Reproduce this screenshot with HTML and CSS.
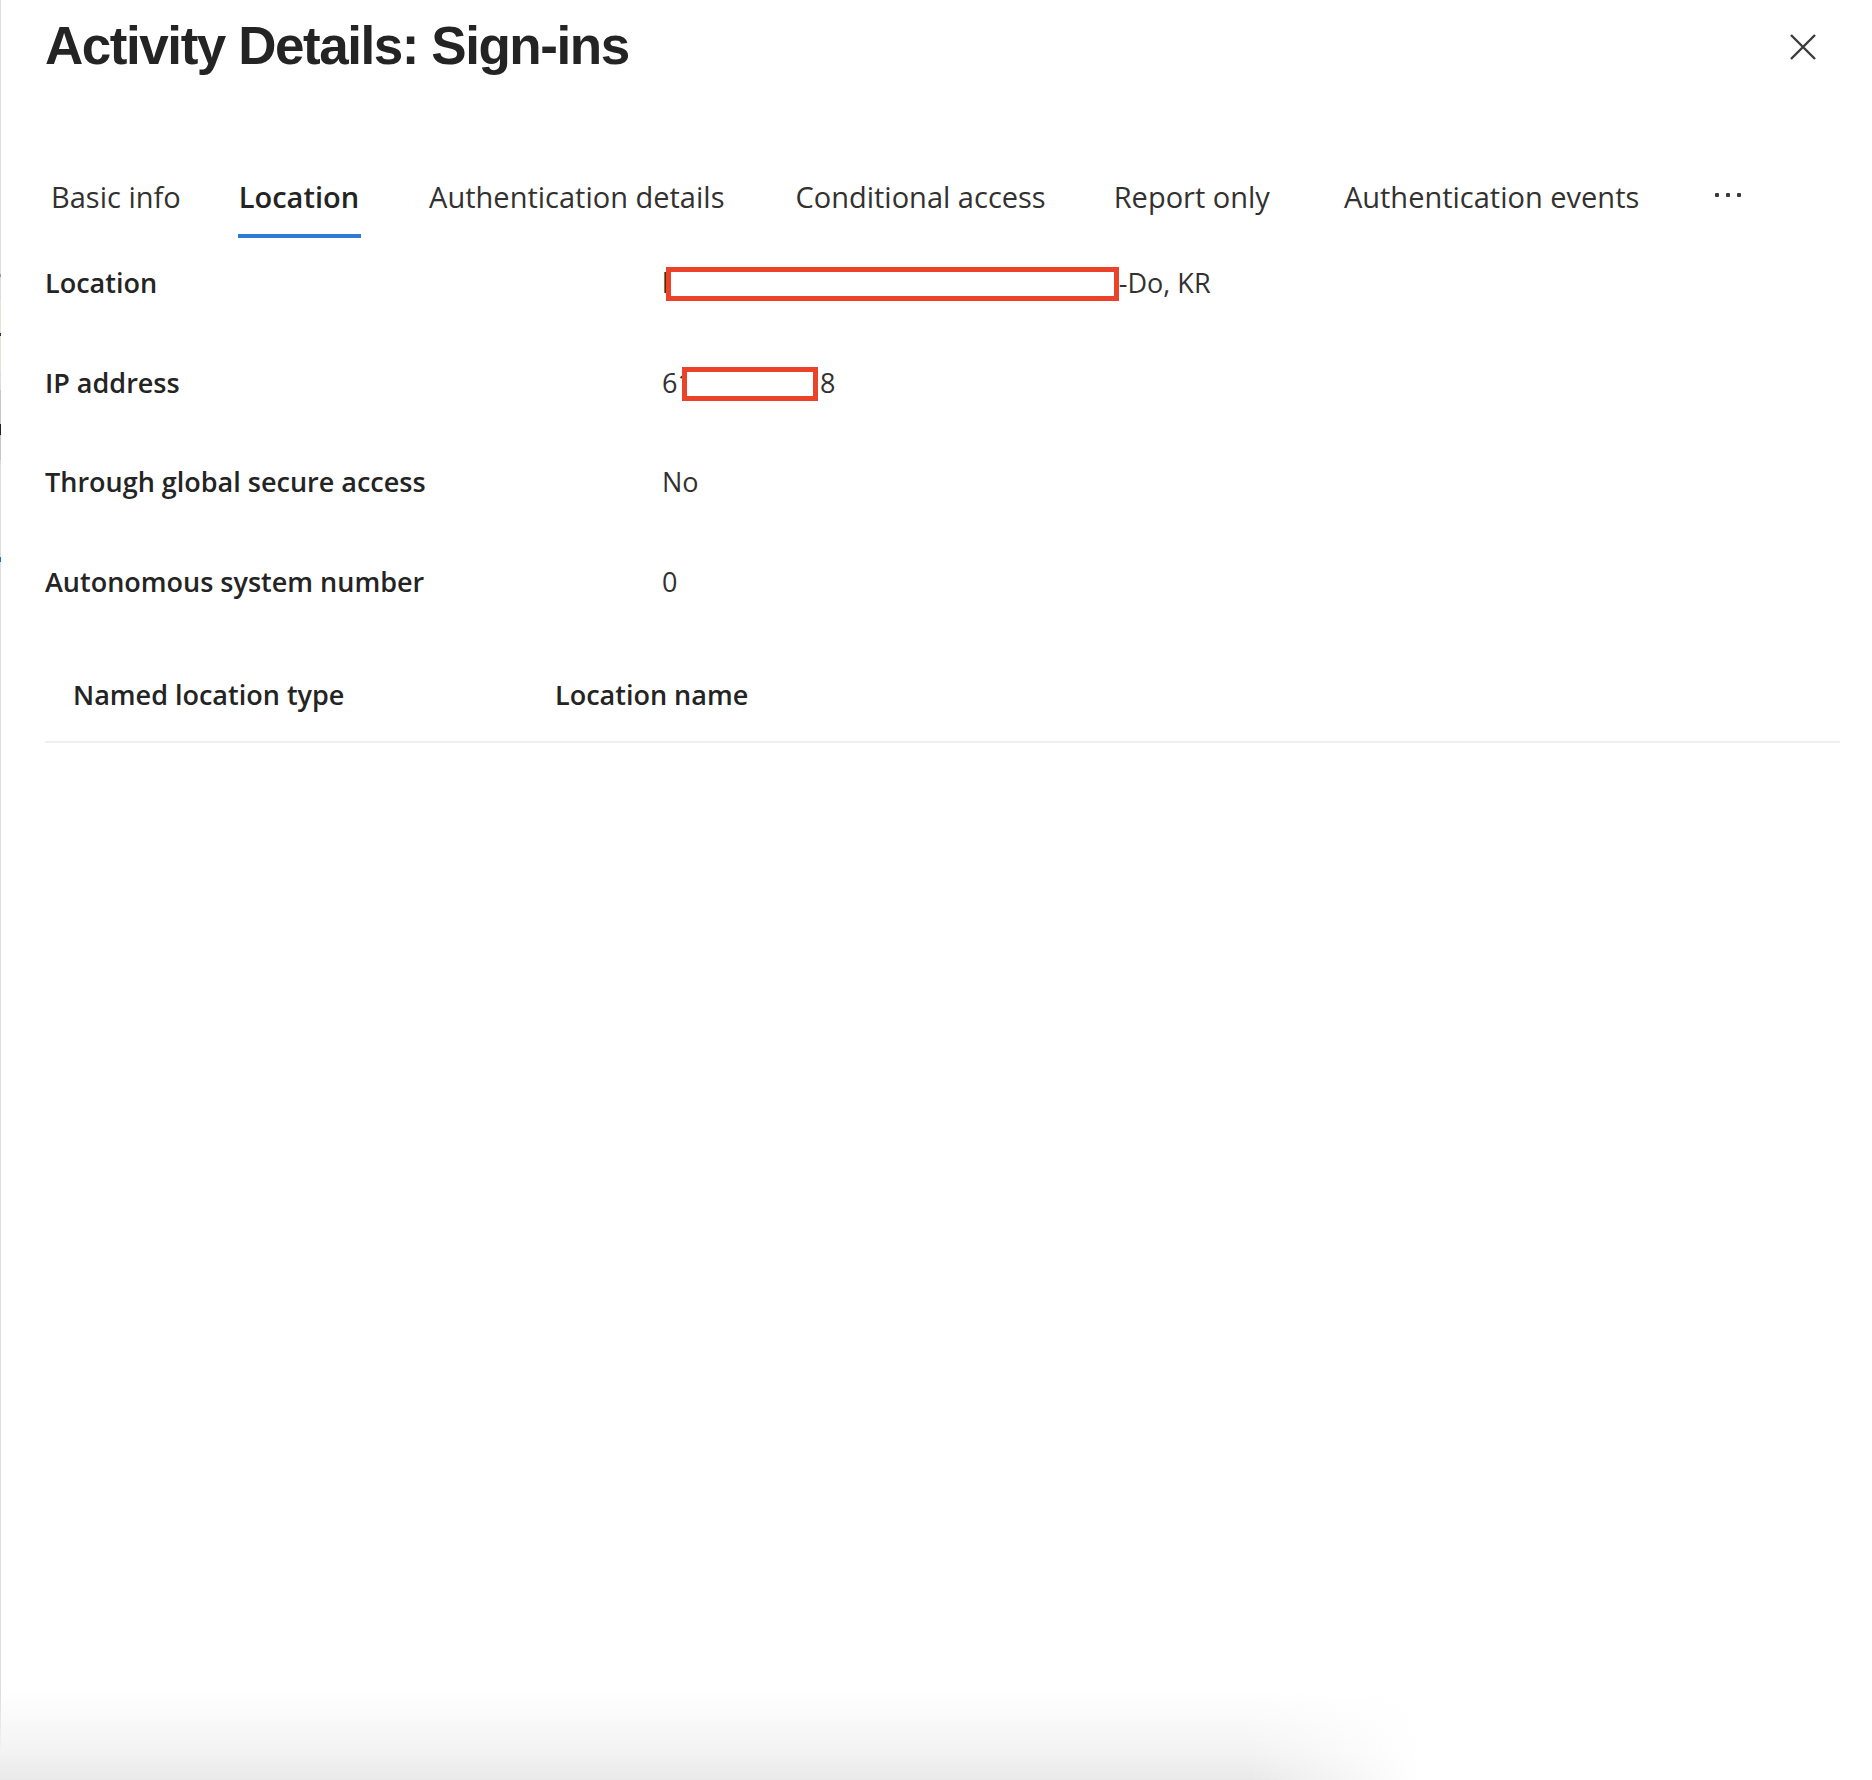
FILE: index.html
```html
<!DOCTYPE html>
<html lang="en">
<head>
<meta charset="utf-8">
<title>Activity Details: Sign-ins</title>
<link rel="stylesheet" href="styles.css">
</head>
<body>
<div class="panel">
  <header class="head">
    <h1 class="title">Activity Details: Sign-ins</h1>
    <button class="close" aria-label="Close">
      <svg width="26" height="26" viewBox="0 0 26 26"><path d="M1 1 L25 25 M25 1 L1 25" stroke="#3b3b3b" stroke-width="2.4" fill="none"/></svg>
    </button>
  </header>

  <nav class="tabs">
    <span class="tab">Basic info</span>
    <span class="tab active">Location</span>
    <span class="tab">Authentication details</span>
    <span class="tab tab-cond">Conditional access</span>
    <span class="tab">Report only</span>
    <span class="tab tab-events">Authentication events</span>
    <span class="tab more"><i></i><i></i><i></i></span>
  </nav>

  <section class="details">
    <div class="row">
      <div class="label">Location</div>
      <div class="value">l<span class="redact redact-loc"></span>-Do, KR</div>
    </div>
    <div class="row">
      <div class="label">IP address</div>
      <div class="value">61<span class="redact redact-ip"></span>8</div>
    </div>
    <div class="row">
      <div class="label">Through global secure access</div>
      <div class="value">No</div>
    </div>
    <div class="row">
      <div class="label">Autonomous system number</div>
      <div class="value">0</div>
    </div>
  </section>

  <div class="table-head">
    <div class="col col-type">Named location type</div>
    <div class="col">Location name</div>
  </div>

  <div class="shade"></div>
</div>
</body>
</html>
```

FILE: styles.css
```css
* { box-sizing: border-box; }

html, body {
  margin: 0;
  padding: 0;
  background: #ffffff;
}

.panel {
  position: relative;
  width: 1872px;
  height: 1780px;
  overflow: hidden;
  background: #ffffff;
  padding-left: 45px;
  font-family: "Open Sans", "Noto Sans", sans-serif;
  color: #242424;
}

.panel::before {
  content: "";
  position: absolute;
  left: 0;
  top: 0;
  width: 1px;
  height: 100%;
  background: linear-gradient(to bottom,
    #dcdcdc 0, #dcdcdc 274px,
    #9a9a9a 274px, #9a9a9a 277px,
    #dcdcdc 277px, #dcdcdc 300px,
    #e8e3da 300px, #e8e3da 333px,
    #333 333px, #333 336px,
    #e8e3da 336px, #e8e3da 370px,
    #dcdcdc 370px, #dcdcdc 390px,
    #c6c6c6 390px, #c6c6c6 424px,
    #222 424px, #222 435px,
    #c6c6c6 435px, #c6c6c6 460px,
    #dcdcdc 460px, #dcdcdc 557px,
    #1a6fd8 557px, #1a6fd8 562px,
    #dcdcdc 562px, #dcdcdc 100%);
}

/* Header */
.head {
  display: flex;
  justify-content: space-between;
  align-items: flex-start;
  padding-right: 56px;
  height: 72px;
}

.title {
  margin: 0;
  padding-top: 19px;
  font-family: "Liberation Sans", Arial, sans-serif;
  font-weight: 700;
  font-size: 53px;
  line-height: 53px;
  letter-spacing: -1.45px;
  color: #242424;
}

.close {
  margin-top: 34px;
  padding: 0;
  border: 0;
  background: transparent;
  width: 26px;
  height: 26px;
  display: block;
}

.close svg { display: block; }

/* Tabs */
.tabs {
  display: flex;
  align-items: flex-end;
  gap: 68px;
  margin-top: 105px;
  padding-left: 6px;
}

.tab {
  font-size: 29px;
  line-height: 40px;
  color: #323130;
  padding-bottom: 17px;
  border-bottom: 4px solid transparent;
  white-space: nowrap;
}

.tab.active {
  font-weight: 600;
  color: #242424;
  border-bottom-color: #2f7bd4;
  margin-left: -11px;
  padding: 0 2px 17px 1px;
}

.tab-cond { margin-left: 3px; }
.tab-events { margin-left: 6px; }

.tab.more {
  display: flex;
  gap: 7px;
  align-items: center;
  height: 61px;
  padding-bottom: 22px;
  margin-left: 8px;
}

.tab.more i {
  display: block;
  width: 4px;
  height: 4px;
  background: #3a3a3a;
  border-radius: 1px;
}

/* Details */
.details {
  display: flex;
  flex-direction: column;
}

.row {
  display: grid;
  grid-template-columns: 617px 1fr;
  height: 99.5px;
  padding-top: 27px;
  font-size: 27px;
  line-height: 36px;
}

.label {
  font-weight: 600;
  color: #242424;
}

.value {
  color: #323130;
  white-space: nowrap;
}

.redact {
  display: inline-block;
  vertical-align: top;
  height: 34px;
  margin-top: 2px;
  border: 5px solid #ea4329;
  background: #ffffff;
  position: relative;
}

.redact-loc {
  width: 453px;
  margin-left: -3px;
  margin-right: 0;
}

.redact-ip {
  width: 136px;
  margin-left: -11px;
  margin-right: 2px;
}

/* Table head */
.table-head {
  display: flex;
  margin-right: 32px;
  padding: 41px 0 28px 28px;
  border-bottom: 2px solid #efefef;
  font-size: 27px;
  line-height: 36px;
  font-weight: 600;
  color: #242424;
}

.col-type {
  width: 482px;
}

/* Bottom shadow from underlying content */
.shade {
  position: absolute;
  left: 0;
  bottom: 0;
  width: 1420px;
  height: 90px;
  background: linear-gradient(to top, #e9e9e9 0, #f3f3f3 30%, rgba(255,255,255,0) 100%);
  -webkit-mask-image: linear-gradient(to right, #000 0, #000 88%, transparent 100%);
  mask-image: linear-gradient(to right, #000 0, #000 88%, transparent 100%);
  pointer-events: none;
}
```
